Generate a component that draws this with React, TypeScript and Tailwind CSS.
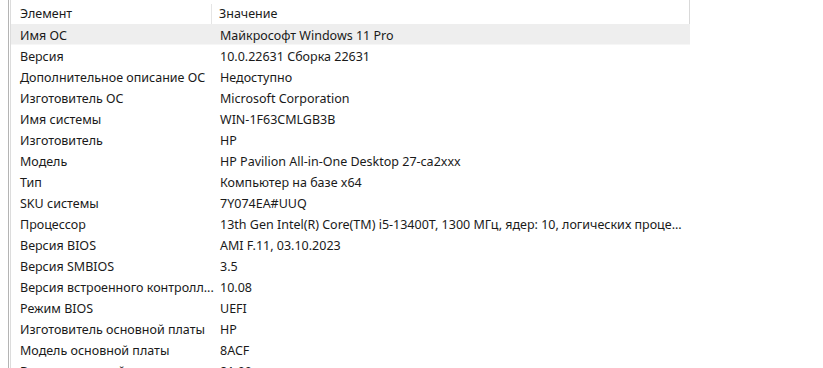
const rows: [string, string][] = [
  ['Имя ОС', 'Майкрософт Windows 11 Pro'],
  ['Версия', '10.0.22631 Сборка 22631'],
  ['Дополнительное описание ОС', 'Недоступно'],
  ['Изготовитель ОС', 'Microsoft Corporation'],
  ['Имя системы', 'WIN-1F63CMLGB3B'],
  ['Изготовитель', 'HP'],
  ['Модель', 'HP Pavilion All-in-One Desktop 27-ca2xxx'],
  ['Тип', 'Компьютер на базе x64'],
  ['SKU системы', '7Y074EA#UUQ'],
  ['Процессор', '13th Gen Intel(R) Core(TM) i5-13400T, 1300 МГц, ядер: 10, логических проце...'],
  ['Версия BIOS', 'AMI F.11, 03.10.2023'],
  ['Версия SMBIOS', '3.5'],
  ['Версия встроенного контролл...', '10.08'],
  ['Режим BIOS', 'UEFI'],
  ['Изготовитель основной платы', 'HP'],
  ['Модель основной платы', '8ACF'],
  ['Версия основной платы', '81.00'],
];

export default function App() {
  return (
    <div
      className="w-[823px] h-[368px] overflow-hidden bg-white text-[12.5px] text-[#1a1a1a] flex"
      style={{ fontFamily: '"Noto Sans", "Open Sans", sans-serif' }}
    >
      <div className="w-[9px] shrink-0 border-r border-[#b4b4b4]" />
      <div className="w-[680px] shrink-0 border-l border-[#dcdcdc] ml-[1px] flex flex-col">
        <div className="h-[24px] shrink-0 flex items-center pt-[4px] border-r border-[#d9d9d9]">
          <div className="w-[201px] pl-[9px] h-full flex items-center border-r border-[#e5e5e5]">Элемент</div>
          <div className="pl-[7px]">Значение</div>
        </div>
        {rows.map(([k, v], i) => (
          <div
            key={k}
            className={
              'h-[21px] shrink-0 flex items-center pt-[4px] whitespace-nowrap ' +
              (i === 0 ? 'bg-[#eeeeee] border-b border-[#f6f6f6]' : '')
            }
          >
            <div className="w-[201px] pl-[9px]">{k}</div>
            <div className="pl-[8px]">{v}</div>
          </div>
        ))}
      </div>
    </div>
  );
}
